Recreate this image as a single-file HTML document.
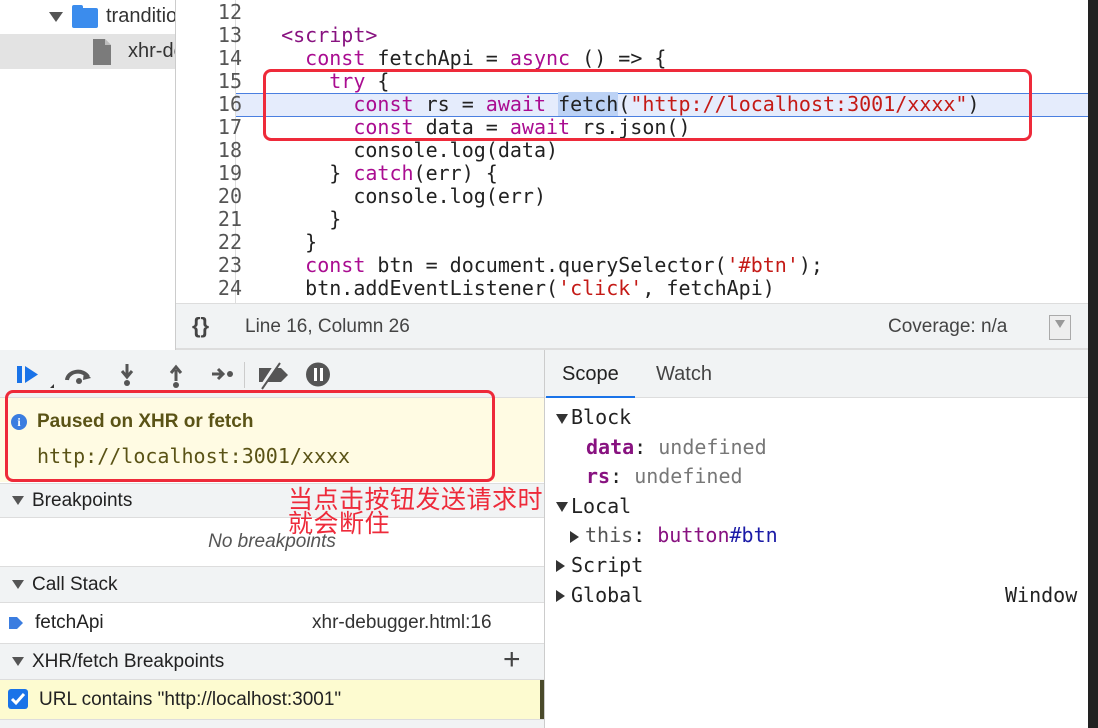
<!DOCTYPE html>
<html><head><meta charset="utf-8"><style>
*{box-sizing:border-box;margin:0;padding:0}
body{width:1098px;height:728px;overflow:hidden;background:#fff;font-family:"Liberation Sans",sans-serif;position:relative;color:#222}
.abs{position:absolute}
.mono{font-family:"DejaVu Sans Mono","Liberation Mono",monospace}
.code{left:176px;top:0;width:912px;height:303px;overflow:hidden}
.ln{position:absolute;left:0;width:66px;text-align:right;font-size:20px;color:#555;line-height:23px;font-family:"DejaVu Sans Mono",monospace}
.cl{position:absolute;left:81px;font-size:20px;line-height:23px;white-space:pre;color:#222}
.k{color:#aa0d91}.s{color:#c41a16}.cm{color:#881280}
.hdr{background:#f1f3f4;border-top:1px solid #ddd;border-bottom:1px solid #ddd;font-size:19px;color:#222}
.tri{display:inline-block;width:0;height:0;border-left:6px solid transparent;border-right:6px solid transparent;border-top:9px solid #555;margin:0 8px 0 12px;vertical-align:middle}
.rtri{display:inline-block;width:0;height:0;border-top:6px solid transparent;border-bottom:6px solid transparent;border-left:9px solid #333;vertical-align:middle;margin-right:6px}
.dtri{display:inline-block;width:0;height:0;border-left:6px solid transparent;border-right:6px solid transparent;border-top:10px solid #333;vertical-align:middle;margin-right:3px}
.sc div{white-space:pre;height:29.6px}
</style></head><body>
<div class="abs" style="left:0;top:0;width:176px;height:350px;background:#fff"></div>
<div class="abs" style="left:0;top:34px;width:176px;height:35px;background:#e3e3e3"></div>
<div class="abs" style="left:49px;top:12px;width:0;height:0;border-left:7px solid transparent;border-right:7px solid transparent;border-top:10px solid #555"></div>
<div class="abs" style="left:72px;top:8px;width:26px;height:20px;background:#3b8ced;border-radius:2px"></div>
<div class="abs" style="left:72px;top:5px;width:11px;height:5px;background:#3b8ced;border-radius:2px 2px 0 0"></div>
<div class="abs" style="left:106px;top:5px;font-size:20px;color:#333;width:70px;overflow:hidden;white-space:nowrap">tranditional</div>
<svg class="abs" style="left:92px;top:37px" width="20" height="29"><path d="M1 2h12l6 6v20H1z" fill="#7b7b7b"/><path d="M13 2v6h6" fill="#fff" opacity=".5"/></svg>
<div class="abs" style="left:128px;top:40px;font-size:20px;color:#333;width:48px;overflow:hidden;white-space:nowrap">xhr-debugger</div>
<div class="abs" style="left:175px;top:0;width:1px;height:350px;background:#ccc"></div>
<div class="abs code">
<div class="abs" style="left:59px;top:0;width:1px;height:303px;background:#ddd"></div>
<div class="abs" style="left:60px;top:93px;width:852px;height:24px;background:#e5ecfc;border-top:1px solid #4a7fe0;border-bottom:1px solid #4a7fe0"></div>
<div class="ln" style="top:1px">12<br>13<br>14<br>15<br>16<br>17<br>18<br>19<br>20<br>21<br>22<br>23<br>24</div>
<div class="cl mono" style="top:1px"> 
  <span class="cm">&lt;script&gt;</span>
    <span class="k">const</span> fetchApi = <span class="k">async</span> () =&gt; {
      <span class="k">try</span> {
        <span class="k">const</span> rs = <span class="k">await</span> <span style="background:#bcd2f5">fetch</span>(<span class="s">"http://localhost:3001/xxxx"</span>)
        <span class="k">const</span> data = <span class="k">await</span> rs.json()
        console.log(data)
      } <span class="k">catch</span>(err) {
        console.log(err)
      }
    }
    <span class="k">const</span> btn = document.querySelector(<span class="s">'#btn'</span>);
    btn.addEventListener(<span class="s">'click'</span>, fetchApi)</div>
</div>
<div class="abs" style="left:263px;top:69px;width:769px;height:72px;border:3px solid #ee2a3a;border-radius:8px"></div>
<div class="abs" style="left:1088px;top:0;width:10px;height:728px;background:#222"></div>
<div class="abs" style="left:176px;top:303px;width:912px;height:47px;background:#f1f3f4;border-top:1px solid #ddd;border-bottom:2px solid #ddd"></div>
<div class="abs" style="left:192px;top:313px;font-size:22px;color:#444;font-weight:bold">{}</div>
<div class="abs" style="left:245px;top:316px;font-size:19px;color:#444">Line 16, Column 26</div>
<div class="abs" style="left:888px;top:316px;font-size:19px;color:#444">Coverage: n/a</div>
<div class="abs" style="left:1049px;top:315px;width:22px;height:25px;border:1px solid #aaa;background:#eee"></div>
<div class="abs" style="left:1055px;top:320px;width:0;height:0;border-left:5px solid transparent;border-right:5px solid transparent;border-top:8px solid #999"></div>
<div class="abs" style="left:0;top:350px;width:544px;height:47px;background:#f1f3f4"></div>
<svg class="abs" style="left:14px;top:362px" width="320" height="28">
<rect x="3" y="4" width="5" height="17" fill="#1a73e8"/><path d="M11 4l13 8.5L11 21z" fill="#1a73e8"/><path d="M36 26l4-4v4z" fill="#333"/>
<path d="M53 18a11 9 0 0 1 21-3" stroke="#555" stroke-width="4" fill="none"/><path d="M70 9l7 7-8 2z" fill="#555"/><circle cx="65" cy="19" r="3" fill="#555"/>
<path d="M113 2v11M108 9l5 6 5-6" stroke="#555" stroke-width="3" fill="none"/><circle cx="113" cy="21" r="3" fill="#555"/>
<path d="M162 19V8M157 11l5-6 5 6" stroke="#555" stroke-width="3" fill="none"/><circle cx="162" cy="23" r="3" fill="#555"/>
<path d="M198 12h10M204 7l5 5-5 5" stroke="#555" stroke-width="3" fill="none"/><circle cx="216" cy="12" r="3" fill="#555"/>
<rect x="230" y="0" width="1" height="26" fill="#ccc"/>
<path d="M245 6h22l7 7-7 7h-22z" fill="#555"/><path d="M247 26L264 0" stroke="#f1f3f4" stroke-width="4"/><path d="M248 27L266 1" stroke="#555" stroke-width="2"/>
<path d="M316 12.5a12 12 0 1 1 -24 0a12 12 0 1 1 24 0z" fill="#555"/><rect x="300" y="6" width="3" height="13" fill="#fff"/><rect x="306" y="6" width="3" height="13" fill="#fff"/>
</svg>
<div class="abs" style="left:0;top:397px;width:544px;height:85px;background:#fffbe3;border-top:1px solid #ddd"></div>
<div class="abs" style="left:11px;top:414px;width:16px;height:16px;border-radius:50%;background:#3b7de0;color:#fff;font-size:12px;font-weight:bold;text-align:center;line-height:16px;font-family:'Liberation Serif',serif">i</div>
<div class="abs" style="left:37px;top:411px;font-size:19px;font-weight:bold;color:#5a5316">Paused on XHR or fetch</div>
<div class="abs mono" style="left:37px;top:444px;font-size:20px;color:#5a5316">http://localhost:3001/xxxx</div>
<div class="abs" style="left:5px;top:390px;width:490px;height:92px;border:3px solid #ee2a3a;border-radius:8px"></div>
<div class="abs hdr" style="left:0;top:483px;width:544px;height:35px;line-height:33px"><span class="tri"></span>Breakpoints</div>
<div class="abs" style="left:0;top:518px;width:544px;height:48px;text-align:center;font-style:italic;font-size:19px;color:#555;line-height:48px">No breakpoints</div>
<div class="abs" style="left:288px;top:488px;font-size:25px;color:#ee2a3a;line-height:24px;letter-spacing:0.5px;font-family:'Liberation Sans','Noto Sans CJK SC',sans-serif">当点击按钮发送请求时<br>就会断住</div>
<div class="abs hdr" style="left:0;top:566px;width:544px;height:37px;line-height:35px"><span class="tri"></span>Call Stack</div>
<div class="abs" style="left:0;top:603px;width:544px;height:40px;font-size:19px;line-height:40px">
<svg class="abs" style="left:8px;top:12px" width="16" height="16"><path d="M1 2h8l6 6-6 6H1z" fill="#3b7de0"/></svg>
<span class="abs" style="left:35px">fetchApi</span><span class="abs" style="left:312px;color:#333">xhr-debugger.html:16</span></div>
<div class="abs hdr" style="left:0;top:643px;width:544px;height:37px;line-height:35px"><span class="tri"></span>XHR/fetch Breakpoints<span class="abs" style="left:503px;top:-2px;font-size:30px;color:#444">+</span></div>
<div class="abs" style="left:0;top:680px;width:544px;height:39px;background:#fdfbd0;border-right:4px solid #4a4a2a;font-size:19px;line-height:39px">
<div class="abs" style="left:8px;top:9px;width:20px;height:20px;background:#1a73e8;border-radius:3px"></div>
<svg class="abs" style="left:8px;top:9px" width="20" height="20"><path d="M4 10l4 4 8-9" stroke="#fff" stroke-width="3" fill="none"/></svg>
<span class="abs" style="left:39px">URL contains "http://localhost:3001"</span></div>
<div class="abs" style="left:0;top:719px;width:544px;height:9px;background:#f1f3f4;border-top:1px solid #ddd"></div>
<div class="abs" style="left:544px;top:350px;width:1px;height:378px;background:#ccc"></div>
<div class="abs" style="left:545px;top:350px;width:543px;height:48px;background:#f1f3f4;border-bottom:1px solid #ddd"></div>
<div class="abs" style="left:562px;top:363px;font-size:20px;color:#222">Scope</div>
<div class="abs" style="left:656px;top:363px;font-size:20px;color:#444">Watch</div>
<div class="abs" style="left:546px;top:396px;width:89px;height:2px;background:#1a73e8"></div>
<div class="abs mono sc" style="left:556px;top:403px;width:530px;font-size:20px;line-height:29px;color:#222"><div><span class="dtri"></span>Block</div><div style="padding-left:30px"><b class="cm">data</b>: <span style="color:#777">undefined</span></div><div style="padding-left:30px"><b class="cm">rs</b>: <span style="color:#777">undefined</span></div><div><span class="dtri"></span>Local</div><div style="padding-left:14px"><span class="rtri"></span><span style="color:#555">this</span>: <span class="cm">button</span><span style="color:#1a1aa6">#btn</span></div><div><span class="rtri"></span>Script</div><div style="position:relative"><span class="rtri"></span>Global<span style="position:absolute;left:449px">Window</span></div></div>
</body></html>
